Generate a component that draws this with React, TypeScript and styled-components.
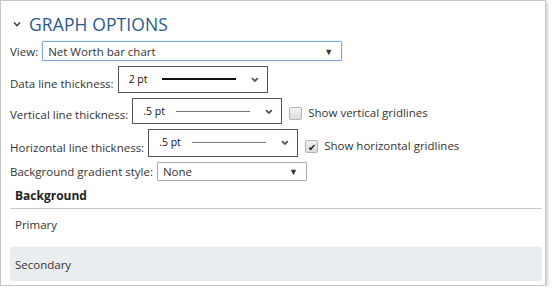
import * as React from "react";
import styled, { createGlobalStyle } from "styled-components";

const GlobalStyle = createGlobalStyle`
  body {
    margin: 0;
    background: #fff;
    font-family: "Open Sans", "Liberation Sans", sans-serif;
    color: #333;
  }
`;

const Panel = styled.div`
  width: 546px;
  height: 286px;
  box-sizing: border-box;
  border: 1px solid #c6c6c6;
  box-shadow: 2px 2px 3px rgba(0, 0, 0, 0.18);
  padding: 0 3px 0 9px;
  display: flex;
  flex-direction: column;
`;

const Header = styled.div`
  display: flex;
  align-items: center;
  height: 22px;
  margin-top: 12px;
  padding-left: 3px;
  gap: 8px;
  color: #2a5a8c;
  font-size: 17.5px;
  letter-spacing: 0.1px;
`;

const Row = styled.div<{ $top: number }>`
  display: flex;
  align-items: flex-end;
  margin-top: ${p => p.$top}px;
  font-size: 11.5px;
`;

const Label = styled.span`
  line-height: 16px;
  margin-bottom: 1px;
  margin-right: 4px;
  white-space: nowrap;
`;

const Select = styled.div<{ $width: number; $height: number; $focused?: boolean }>`
  width: ${p => p.$width}px;
  height: ${p => p.$height}px;
  box-sizing: border-box;
  border: 1px solid ${p => (p.$focused ? "#7ba4e4" : "#aaa")};
  border-radius: 1px;
  box-shadow: ${p => (p.$focused ? "0 0 1px #9dbdf0" : "none")};
  display: flex;
  align-items: center;
  padding: 0 8px 0 5px;
  font-size: 11.5px;
  color: #333;
`;

const SelectText = styled.span`
  flex: 1;
`;

const Triangle = styled.span`
  font-size: 9px;
  color: #333;
`;

const LineSelect = styled.div<{ $width: number; $height: number }>`
  width: ${p => p.$width}px;
  height: ${p => p.$height}px;
  box-sizing: border-box;
  border: 1px solid #555;
  display: flex;
  align-items: flex-start;
  padding: 6px 8px 0 10px;
`;

const Thickness = styled.span`
  font-size: 10.5px;
  width: 34px;
  line-height: 12px;
  color: #111;
`;

const Sample = styled.span<{ $weight: number }>`
  width: 76px;
  height: 0;
  margin-top: ${p => (p.$weight > 1 ? 5 : 6)}px;
  border-top: ${p => p.$weight}px solid ${p => (p.$weight > 1 ? "#111" : "#777")};
`;

const Chevron = styled.svg`
  margin-left: 15px;
  margin-top: 4px;
`;

const Check = styled.span<{ $checked?: boolean }>`
  width: 13px;
  height: 13px;
  box-sizing: border-box;
  border: 1px solid #b4b4b4;
  border-radius: 2px;
  background: linear-gradient(#f2f2f2, #dcdcdc);
  margin: 0 6px 4px 7px;
  display: flex;
  align-items: center;
  justify-content: center;
  font-size: 10px;
  line-height: 1;
  color: #222;
`;

const CheckLabel = styled.span`
  line-height: 16px;
  margin-bottom: 3px;
  font-size: 11.5px;
`;

const SectionTitle = styled.div`
  margin-top: 6px;
  padding: 0 5px 4px;
  font-weight: 700;
  font-size: 12px;
  color: #222;
  border-bottom: 1px solid #c8c8c8;
`;

const ColorRow = styled.div<{ $shaded?: boolean }>`
  height: ${p => (p.$shaded ? 34 : 38)}px;
  display: flex;
  align-items: center;
  padding-left: 5px;
  font-size: 11.5px;
  padding-bottom: ${p => (p.$shaded ? 0 : 8)}px;
  box-sizing: border-box;
  background: ${p => (p.$shaded ? "#eaedf0" : "transparent")};
`;

const ChevronIcon = () => (
  <Chevron width="8" height="5" viewBox="0 0 8 5">
    <path d="M1 1 L4 4 L7 1" fill="none" stroke="#555" strokeWidth="1.8" />
  </Chevron>
);

const LineChoice = (props: { text: string; weight: number; width: number; height: number }) => (
  <LineSelect $width={props.width} $height={props.height}>
    <Thickness>{props.text}</Thickness>
    <Sample $weight={props.weight} />
    <ChevronIcon />
  </LineSelect>
);

const App = () => (
  <>
    <GlobalStyle />
    <Panel>
      <Header>
        <svg width="8" height="6" viewBox="0 0 8 6">
          <path d="M1 1.5 L4 4.5 L7 1.5" fill="none" stroke="#444" strokeWidth="1.6" />
        </svg>
        GRAPH OPTIONS
      </Header>
      <Row $top={6}>
        <Label>View:</Label>
        <Select $width={300} $height={20} $focused>
          <SelectText>Net Worth bar chart</SelectText>
          <Triangle>▼</Triangle>
        </Select>
      </Row>
      <Row $top={5}>
        <Label>Data line thickness:</Label>
        <LineChoice text="2 pt" weight={2} width={150} height={27} />
      </Row>
      <Row $top={5}>
        <Label>Vertical line thickness:</Label>
        <LineChoice text=".5 pt" weight={1} width={150} height={26} />
        <Check />
        <CheckLabel>Show vertical gridlines</CheckLabel>
      </Row>
      <Row $top={5}>
        <Label>Horizontal line thickness:</Label>
        <LineChoice text=".5 pt" weight={1} width={150} height={28} />
        <Check $checked>✔</Check>
        <CheckLabel>Show horizontal gridlines</CheckLabel>
      </Row>
      <Row $top={5}>
        <Label>Background gradient style:</Label>
        <Select $width={150} $height={19}>
          <SelectText>None</SelectText>
          <Triangle>▼</Triangle>
        </Select>
      </Row>
      <SectionTitle>Background</SectionTitle>
      <ColorRow>Primary</ColorRow>
      <ColorRow $shaded>Secondary</ColorRow>
    </Panel>
  </>
);

export default App;
